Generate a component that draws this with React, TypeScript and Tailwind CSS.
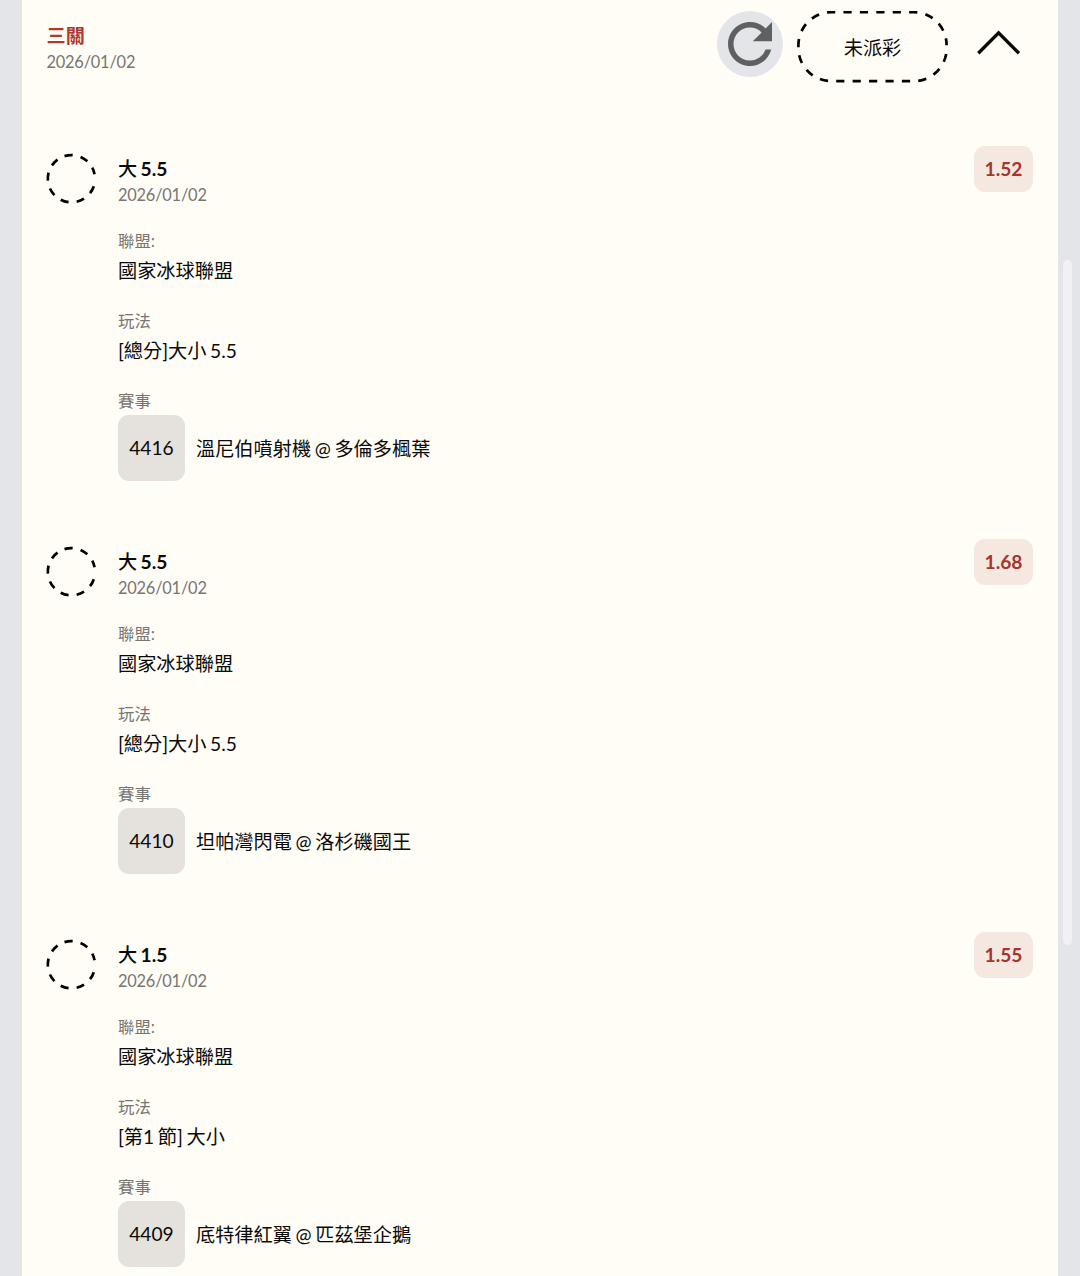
import { MdRefresh } from 'react-icons/md'

/**
 * A single leg of the parlay ticket
 */
interface Leg {
  /** Selected side */
  side: string
  /** Total line */
  line: string
  date: string
  odds: string
  league: string
  /** Bet type */
  market: string
  /** Event number shown in the grey chip */
  code: string
  /** Away @ home */
  match: string
}

const legs: Leg[] = [
  {
    side: '大',
    line: '5.5',
    date: '2026/01/02',
    odds: '1.52',
    league: '國家冰球聯盟',
    market: '[總分]大小 5.5',
    code: '4416',
    match: '溫尼伯噴射機 @ 多倫多楓葉'
  },
  {
    side: '大',
    line: '5.5',
    date: '2026/01/02',
    odds: '1.68',
    league: '國家冰球聯盟',
    market: '[總分]大小 5.5',
    code: '4410',
    match: '坦帕灣閃電 @ 洛杉磯國王'
  },
  {
    side: '大',
    line: '1.5',
    date: '2026/01/02',
    odds: '1.55',
    league: '國家冰球聯盟',
    market: '[第1 節] 大小',
    code: '4409',
    match: '底特律紅翼 @ 匹茲堡企鵝'
  }
]

/** Dashed ring, empty while the leg is not settled */
function PendingRing() {
  return (
    <svg className="mt-[7px] h-[52px] w-[52px] shrink-0" viewBox="-26.4 -25.7 52 52" fill="none">
      <path
        d="M22.38 7.5A23.6 23.6 0 1 1 23.17 -4.5"
        stroke="#000"
        strokeWidth="2.7"
        strokeDasharray="8 8.08"
      />
    </svg>
  )
}

/** Dashed pill with the payout status */
function StatusPill({ label }: { label: string }) {
  return (
    <div className="relative ml-3.5 flex h-[72px] w-[151px] items-center justify-center">
      <svg className="absolute inset-0" width="151" height="72" viewBox="0 0 151 72" fill="none">
        <path
          d="M149.2 43A33 33 0 0 1 116.6 70.1H34.4A33 33 0 0 1 1.4 37.1V34.2A33 33 0 0 1 34.4 1.2H116.6A33 33 0 0 1 149.6 34.2"
          stroke="#000"
          strokeWidth="2.7"
          strokeDasharray="8.2 8.23"
        />
      </svg>
      <span className="pt-px text-[19.2px] leading-6">{label}</span>
    </div>
  )
}

/** Small grey caption with its value below */
function Field({ label, value }: { label: string; value: string }) {
  return (
    <div className="h-[79.5px]">
      <div className="text-[16.4px] leading-6 text-[#777673]">{label}</div>
      <div className="mt-1.5 text-[19.2px] leading-6">{value}</div>
    </div>
  )
}

function LegRow({ leg }: { leg: Leg }) {
  return (
    <div className="flex h-[393px] items-start">
      <PendingRing />
      <div className="ml-[21px] flex-1 pt-[11px]">
        <div className="text-[19.2px] leading-6 font-bold">
          <span className="font-medium">{leg.side}</span> {leg.line}
        </div>
        <div className="mt-0.5 mb-[22px] text-[16.4px] leading-6 tracking-[-0.22px] text-[#777673]">
          {leg.date}
        </div>
        <Field label="聯盟:" value={leg.league} />
        <Field label="玩法" value={leg.market} />
        <div className="pt-px text-[16.4px] leading-6 text-[#777673]">賽事</div>
        <div className="mt-0.5 flex items-center">
          <div className="flex h-[66px] w-[67px] items-center justify-center rounded-[11px] bg-[#e5e2dd] text-[19.2px]">
            {leg.code}
          </div>
          <div className="ml-[11px] pt-0.5 text-[19.2px]">{leg.match}</div>
        </div>
      </div>
      <div className="flex h-[46px] w-[59px] items-center justify-center rounded-[11px] bg-[#f5e8e1] text-[19.2px] font-bold text-[#a7352b]">
        {leg.odds}
      </div>
    </div>
  )
}

/**
 * Expanded parlay ticket with its header and every leg
 */
export default function App() {
  return (
    <div className="relative h-[1276px] overflow-hidden bg-[#e4e5e9] px-[22px] font-['Lato','Noto_Sans_CJK_TC',sans-serif] [word-spacing:-1.3px] text-[#0a0a0a]">
      <div className="h-full bg-[#fffdf6] pr-[25px] pl-[23px]">
        <div className="flex h-[146px] items-start pt-[11px]">
          <div className="flex-1 pt-[13px] pl-[1.5px]">
            <div className="text-[19.2px] leading-6 font-bold text-[#b0382f]">三關</div>
            <div className="mt-0.5 text-[16.4px] leading-6 tracking-[-0.22px] text-[#777673]">
              2026/01/02
            </div>
          </div>
          <button
            className="flex h-[66px] w-[66px] items-center justify-center rounded-full bg-[#e4e5e9]"
            aria-label="Refresh"
          >
            <MdRefresh className="h-[66px] w-[66px] text-[#5f6062]" />
          </button>
          <StatusPill label="未派彩" />
          <svg className="mt-[17px] mr-[11px] ml-7 h-8 w-[46px]" viewBox="0 0 46 32" fill="none">
            <path d="M2.3 25.3L22.6 4.8L43 25.3" stroke="#0a0a0a" strokeWidth="3.4" />
          </svg>
        </div>
        {legs.map((leg) => (
          <LegRow key={leg.code} leg={leg} />
        ))}
      </div>
      {/* Scrollbar thumb */}
      <div className="absolute top-[260px] right-2 h-[685px] w-[9px] rounded-full bg-[#f1f1f5]" />
    </div>
  )
}
